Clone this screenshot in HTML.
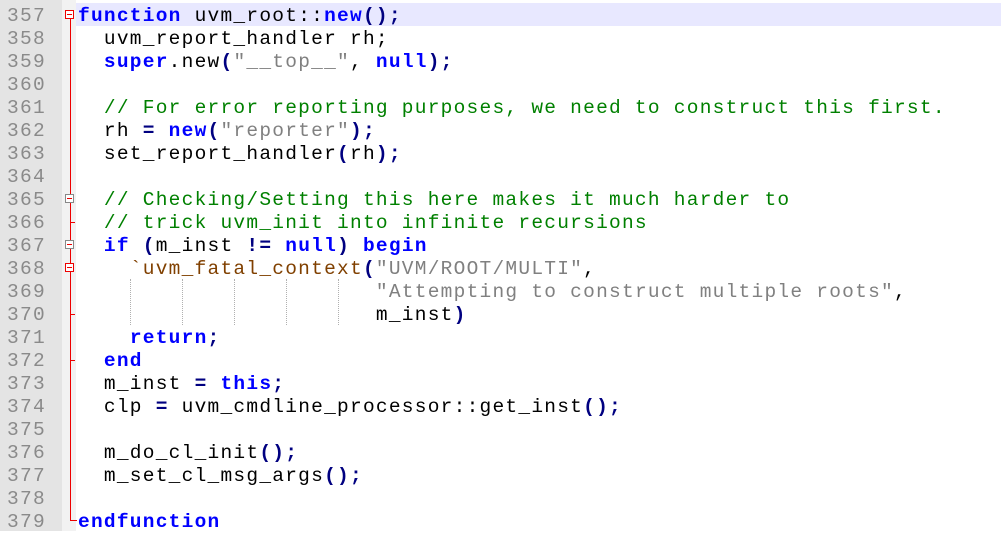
<!DOCTYPE html>
<html><head><meta charset="utf-8"><style>
body{margin:0;width:1001px;height:531px;overflow:hidden;background:#fff;position:relative;font-family:"Liberation Mono",monospace;}
#ln{position:absolute;left:0;top:0;width:62px;height:531px;background:#e4e4e4;}
#fm{position:absolute;left:62px;top:0;width:14px;height:531px;background:#f2f2f2;}
#hl{position:absolute;left:76px;top:3px;width:925px;height:23px;background:#e8e8ff;}
.n{position:absolute;left:0;width:46px;text-align:right;color:#8a8a8a;font-size:19.5px;letter-spacing:1.3px;line-height:23px;height:23px;padding-top:2px;}
pre{position:absolute;left:78px;top:5px;margin:0;font-family:"Liberation Mono",monospace;font-size:19.5px;letter-spacing:1.25px;line-height:23px;color:#000;}
.k{color:#0000ff;font-weight:bold}
.o{color:#000080;font-weight:bold}
.s{color:#808080}
.c{color:#008000}
.m{color:#804000}
.g{position:absolute;width:0;border-left:1px dotted #b0b0b0;top:279px;height:46px;}
.box{position:absolute;left:65px;width:9px;height:9px;border:1px solid #e00;background:#fff;box-sizing:border-box;}
.box:after{content:"";position:absolute;left:1px;top:3px;width:5px;height:1px;background:#e00;}
.t{position:absolute;left:70px;width:5px;height:1px;background:#e00;}
</style></head><body>
<div id="ln"></div><div id="fm"></div><div id="hl"></div>
<div style="position:absolute;left:70px;top:14px;width:1px;height:507px;background:#e00"></div>
<div style="position:absolute;left:70px;top:520px;width:7px;height:1px;background:#e00"></div>
<div class="box" style="top:10px"></div>
<div class="box" style="top:194px;border-color:#888"></div>
<div class="box" style="top:240px;border-color:#888"></div>
<div class="box" style="top:263px"></div>
<div class="t" style="top:222px"></div>
<div class="t" style="top:314px"></div>
<div class="t" style="top:360px"></div>
<div class="g" style="left:130px"></div><div class="g" style="left:182px"></div><div class="g" style="left:234px"></div><div class="g" style="left:286px"></div><div class="g" style="left:338px"></div>
<div class="n" style="top:3px">357</div><div class="n" style="top:26px">358</div><div class="n" style="top:49px">359</div><div class="n" style="top:72px">360</div><div class="n" style="top:95px">361</div><div class="n" style="top:118px">362</div><div class="n" style="top:141px">363</div><div class="n" style="top:164px">364</div><div class="n" style="top:187px">365</div><div class="n" style="top:210px">366</div><div class="n" style="top:233px">367</div><div class="n" style="top:256px">368</div><div class="n" style="top:279px">369</div><div class="n" style="top:302px">370</div><div class="n" style="top:325px">371</div><div class="n" style="top:348px">372</div><div class="n" style="top:371px">373</div><div class="n" style="top:394px">374</div><div class="n" style="top:417px">375</div><div class="n" style="top:440px">376</div><div class="n" style="top:463px">377</div><div class="n" style="top:486px">378</div><div class="n" style="top:509px">379</div>
<pre><span class="k">function</span> uvm_root::<span class="k">new</span><span class="o">();</span>
  uvm_report_handler rh;
  <span class="k">super</span>.new<span class="o">(</span><span class="s">"__top__"</span>, <span class="k">null</span><span class="o">);</span>

  <span class="c">// For error reporting purposes, we need to construct this first.</span>
  rh <span class="o">=</span> <span class="k">new</span><span class="o">(</span><span class="s">"reporter"</span><span class="o">);</span>
  set_report_handler<span class="o">(</span>rh<span class="o">);</span>

  <span class="c">// Checking/Setting this here makes it much harder to</span>
  <span class="c">// trick uvm_init into infinite recursions</span>
  <span class="k">if</span> <span class="o">(</span>m_inst <span class="o">!=</span> <span class="k">null</span><span class="o">)</span> <span class="k">begin</span>
    <span class="m">`uvm_fatal_context</span><span class="o">(</span><span class="s">"UVM/ROOT/MULTI"</span>,
                       <span class="s">"Attempting to construct multiple roots"</span>,
                       m_inst<span class="o">)</span>
    <span class="k">return</span><span class="o">;</span>
  <span class="k">end</span>
  m_inst <span class="o">=</span> <span class="k">this</span><span class="o">;</span>
  clp <span class="o">=</span> uvm_cmdline_processor::get_inst<span class="o">();</span>

  m_do_cl_init<span class="o">();</span>
  m_set_cl_msg_args<span class="o">();</span>

<span class="k">endfunction</span></pre>
</body></html>
